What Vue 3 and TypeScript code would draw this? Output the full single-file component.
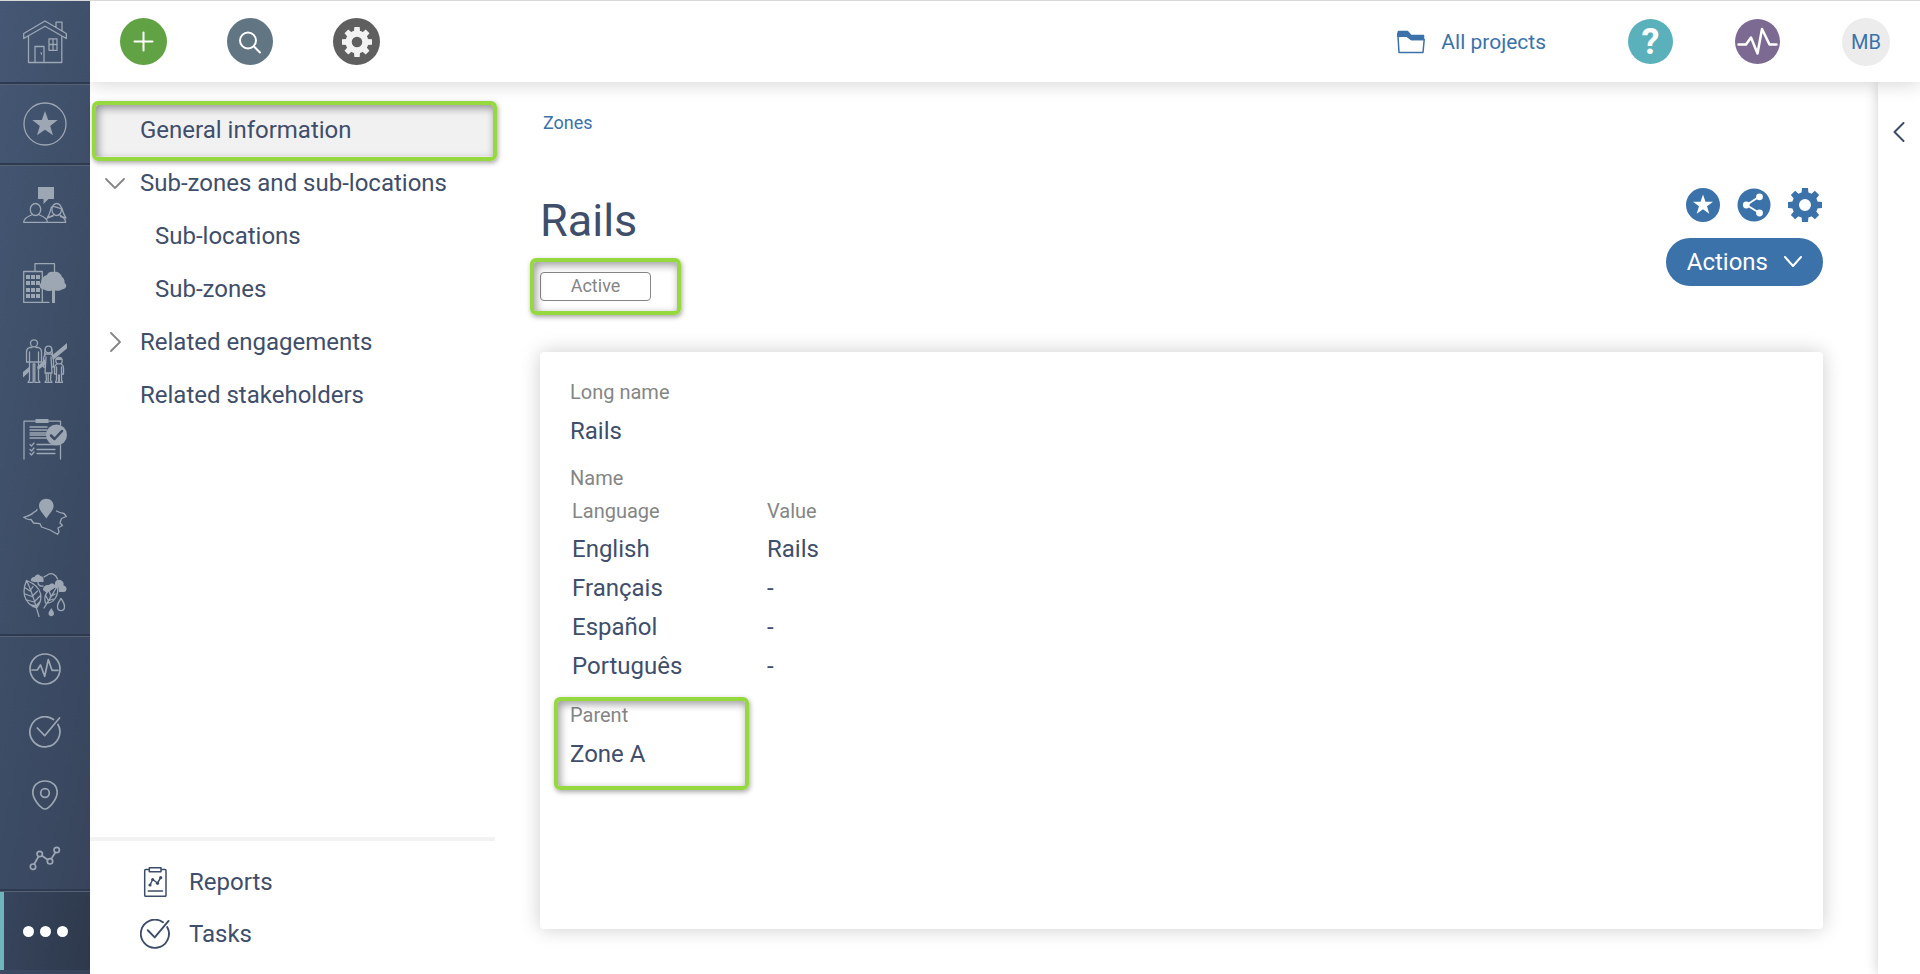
<script setup lang="ts">
interface NameRow {
  language: string
  value: string
}

const names: NameRow[] = [
  { language: 'English', value: 'Rails' },
  { language: 'Français', value: '-' },
  { language: 'Español', value: '-' },
  { language: 'Português', value: '-' },
]

const teeth: number[] = [0, 45, 90, 135, 180, 225, 270, 315]
const windowCols: number[] = [4, 9, 14]
const windowRows: number[] = [14, 20, 27, 33]
const textLines: number[] = [10, 13, 16, 18, 21]
const checkLines: number[] = [27, 32, 36]
</script>

<template>
  <div class="app">
    <nav class="rail" aria-label="Modules">
      <a class="rail-item home" href="#" aria-label="Home">
        <svg class="icon-lg" viewBox="0 0 44 44">
          <path d="M22 1 43.300 13.500V18.500L22 6.200.700 18.500V13.500ZM33 7.300V2.200h6v8.500M5.500 16V42.500H38.800V16M12 42V26.500h9V42M26 18.800h8v11.500H26ZM30 18.800v11.500M26 24.500h8" />
          <path class="solid" d="M17 32.500h2v3Z" />
        </svg>
      </a>
      <a class="rail-item" href="#" aria-label="Favorites">
        <svg class="icon-lg" viewBox="0 0 44 44">
          <circle cx="22" cy="22" r="21" />
          <path class="solid" d="M22 9 25.200 18H34.700L27.200 23.900 30 33.200 22 27.800 14 33.200 16.800 23.900 9.300 18H18.800Z" />
        </svg>
      </a>
      <div class="rail-group">
        <a class="rail-item" href="#" aria-label="Engagement">
          <svg class="icon-lg" viewBox="0 0 44 44">
            <path class="solid" d="M15 4H31V16H25.500L20.500 21V16H15Z" />
            <ellipse cx="12.500" cy="26.500" rx="5.200" ry="6" />
            <path d="M.700 39.300C1 34 6 33.500 9.500 31.500M15.500 31.500C19 33.500 24 34 24.500 39.300H.700M24.500 39.300H42.700C42.300 34.500 39.500 34 36 31.500M31.300 31.500 24 35.500" />
            <ellipse cx="33.700" cy="26.500" rx="4.800" ry="6" />
            <path d="M29 24C32 22 35 26 38.500 25.500M28.500 24C27 29 26.500 32 24.500 34.500L30 33M38.800 25C40 30 41 32 43 35L37.500 33.500" />
          </svg>
        </a>
        <a class="rail-item" href="#" aria-label="Land">
          <svg class="icon-lg" viewBox="0 0 44 44">
            <path d="M26 41.300H.700V10.500H19.300V41M12 10V2.700H31.500V12" />
            <template v-for="y in windowRows" :key="y">
              <rect v-for="x in windowCols" :key="x" class="solid" :x="x - 1" :y="y" width="4" height="4" />
            </template>
            <path class="solid" d="M24 14C25 11 28 10.500 30 11 34 10 38 12 39 16 41 17 42 20 41.500 22 45 24 43 28 39 28.500 36 30.500 34 29.500 32 29.500V42H29V29.500C26 30.500 23 30 21 28.500 17 28.500 15 24 18 22 18 18 20 15 24 14Z" />
          </svg>
        </a>
        <a class="rail-item" href="#" aria-label="Households">
          <svg class="icon-lg" viewBox="0 0 44 44">
            <path class="solid" d="M0 33 6 28V33L0 38.500ZM14 28 22 20V26L15 31ZM29 16.500 44 4V9.500L30 21Z" />
            <circle cx="11" cy="4.300" r="3.500" />
            <path d="M9 8.500H6.500Q3.500 9.500 3.500 13V23H6.500V13M13 8.500H15.500Q18.500 9.500 18.500 13V23H15.500V13M6.500 22V41L5 43.300H10.200V25H11.800V43.300H17L15.500 41V22M6.500 23H15.500" />
            <circle cx="25.500" cy="10.500" r="3.300" />
            <path d="M22.300 10 21.500 15H29.500L28.700 10M22.500 15.500Q20.500 17 20.500 21V28H22.500M28.500 15.500Q30.500 17 30.500 21V28H28.500M23 18 22 34H29L28 18M23 34 23.500 41 22 43.300H25.200V34M28 34 27.500 41 29 43.300H25.800" />
            <circle cx="36" cy="21.700" r="3.200" />
            <path class="solid" d="M33 20Q36 17.500 39 20L39.500 21H32.500Z" />
            <path d="M34 25Q31.500 26 31.500 29V35H33.500V28M38 25Q40.500 26 40.500 29V35H38.500V28M33.500 34V41L32.500 43.300H35.700V36M38.500 34V41L39.500 43.300H36.300V36" />
          </svg>
        </a>
        <a class="rail-item" href="#" aria-label="Compliance">
          <svg class="icon-lg" viewBox="0 0 44 44">
            <path d="M1 42V4.200H37.500V8M37.500 28V42" />
            <path class="solid" d="M12.500 2h13v4h-13Z" />
            <path v-for="y in textLines" :key="y" d="M7 0H24" :transform="`translate(0 ${y})`" />
            <path v-for="y in checkLines" :key="y" d="M7 .500 8.500 2 11-1M14 .500H32" :transform="`translate(0 ${y})`" />
            <circle class="solid" cx="33.500" cy="18" r="10.500" />
            <path class="cut" d="M28 18.500 31.500 22 39 14" />
          </svg>
        </a>
        <a class="rail-item" href="#" aria-label="Locations">
          <svg class="icon-lg" viewBox="0 0 44 44">
            <path class="solid" d="M23.300 23.500C21 19.500 16 15.500 16 11 16 6.500 19.300 3.700 23.300 3.700S30.600 6.500 30.600 11C30.600 15.500 25.600 19.500 23.300 23.500Z" />
            <path d="M14 14.500C14 17 11 16 10 18 8 20.500 4 21 .700 22.300 3 24 5 25 8 24.500L10.500 28 17 28.700 18.500 32 27 35 34.500 39.300 36 37 35 33 39.500 30.500 37 28 38.500 23.500 43.300 21.500 41 18.500C38 18 36 17.500 33.500 16" />
          </svg>
        </a>
        <a class="rail-item" href="#" aria-label="Environment">
          <svg class="icon-lg" viewBox="0 0 44 44">
            <path d="M3.500 7.500C-1 18 0 30 13.500 35 20 27 21 14 3.500 7.500ZM3.500 7.500C9 18 12 30 16 43.500M2.500 15 7 18 10 13.500M2 21 9 23.500 14.500 18M4 27 11 29 17 23M8 32 13 33 17.500 28" />
            <path class="solid" d="M8 8C7.500 5 9.500 4 11.500 4 12.500 1 16 .500 17.500 3 20 3 21 6 20.500 9H11Z" />
            <path d="M21 4C23 2 24 3 25 1.500 29-.500 33 1.500 34.500 6M15 9.500C15 12 17 13.500 20 13" />
            <path class="solid" d="M20 17C20 13 23 11.500 26 12 28 9.500 31 10.500 32 12 31 7 37 5 40 9 41 10.500 40.500 12 40.500 12.500 44.500 13 44.500 18.500 41 19H36C36 16 35.500 14 34.500 13L24 20Z" />
            <path d="M34.500 13C25 15 20 22 22.500 30 31 31 36 22 34.500 13ZM34.500 13C30 20 27 26 21 35M26 18 28 23M32 21 27 24M23 23 25 27M30 26 25 28M38 25.500C35.500 29 34.500 31 34.500 33.500 34.500 39 41.500 39 41.500 33.500 41.500 31 40.500 29 38 25.500Z" />
            <path class="solid" d="M28.300 35C26.500 38 25.500 39 25.500 40.500 25.500 44 31 44 31 40.500 31 39 30 38 28.300 35Z" />
          </svg>
        </a>
      </div>
      <div class="rail-group">
        <a class="rail-item short" href="#" aria-label="Activity">
          <svg class="icon-md" viewBox="0 0 32 32">
            <circle cx="16" cy="16" r="15" />
            <path d="M3 17H8.300L11.500 12 15.700 23.300 19.300 6.500 23 17.300H29" />
          </svg>
        </a>
        <a class="rail-item short" href="#" aria-label="Tasks">
          <svg class="icon-md" viewBox="0 0 32 32">
            <path d="M24.500 3.500A15 15 0 1 0 29 8.500M8.300 12 15.700 19.700 30.500 2" />
          </svg>
        </a>
        <a class="rail-item short" href="#" aria-label="Places">
          <svg class="icon-md" viewBox="0 0 32 32">
            <path d="M16 30C12 30 3.800 20 3.800 13.500 3.800 6.500 9 2 16 2S28.200 6.500 28.200 13.500C28.200 20 20 30 16 30Z" />
            <circle cx="16" cy="14" r="4.300" />
          </svg>
        </a>
        <a class="rail-item short" href="#" aria-label="Indicators">
          <svg class="icon-md" viewBox="0 0 32 32">
            <path d="M5.300 22 9.500 14.500M13 13.700 18.700 17.700M22.300 16.700 26.500 10.300" />
            <circle cx="4" cy="24.700" r="2.700" /><circle cx="10.700" cy="12" r="2.700" />
            <circle cx="21" cy="19.300" r="2.700" /><circle cx="27.700" cy="8" r="2.700" />
          </svg>
        </a>
      </div>
      <button class="more" type="button" aria-label="More">
        <span class="dot"></span><span class="dot"></span><span class="dot"></span>
      </button>
    </nav>

    <div class="page">
      <header class="topbar">
        <div class="tools">
          <button class="round add" type="button" aria-label="Add">
            <svg width="47" height="47" viewBox="0 0 47 47"><path d="M23.500 14.500v18M14.500 23.500h18" /></svg>
          </button>
          <button class="round search" type="button" aria-label="Search">
            <svg width="46" height="46" viewBox="0 0 46 46"><circle cx="21" cy="21.500" r="8" /><path d="M27 27.500 33 33.500" /></svg>
          </button>
          <button class="round settings" type="button" aria-label="Settings">
            <svg class="gear" width="30" height="30" viewBox="0 0 34 34">
              <circle cx="17" cy="17" r="9.500" />
              <path v-for="a in teeth" :key="a" d="M13.500 6 14 0h6l.500 6Z" :transform="`rotate(${a} 17 17)`" />
            </svg>
          </button>
        </div>
        <div class="account">
          <a class="projects" href="#">
            <svg width="28" height="24" viewBox="0 0 28 24">
              <path class="fill" d="M0 6 1.500 1.500H10.500L14 5.500H26.500V9.500H14L9.500 6Z" />
              <path d="M1 6.500 2 22.500H26L27.200 9.500H14.500L10 6Z" />
            </svg>
            All projects
          </a>
          <button class="round help" type="button" aria-label="Help">?</button>
          <button class="round pulse" type="button" aria-label="Activity feed">
            <svg width="45" height="45" viewBox="0 0 45 45"><path d="M3.500 25.500H11L16 18.500 22.500 34.500 27 10 34.500 25.500H41.500" /></svg>
          </button>
          <button class="round user" type="button">MB</button>
        </div>
      </header>

      <div class="body">
        <aside class="sections">
          <nav class="tree" aria-label="Sections">
            <a class="node current" href="#">General information<span class="mark mark-node"></span></a>
            <a class="node" href="#">
              <svg class="caret" width="20" height="20" viewBox="0 0 20 20"><path d="M1 6 10 15 19 6" /></svg>
              Sub-zones and sub-locations
            </a>
            <a class="node child" href="#">Sub-locations</a>
            <a class="node child" href="#">Sub-zones</a>
            <a class="node" href="#">
              <svg class="caret" width="20" height="20" viewBox="0 0 20 20"><path d="M6 1 15 10 6 19" /></svg>
              Related engagements
            </a>
            <a class="node" href="#">Related stakeholders</a>
          </nav>
          <nav class="shortcuts" aria-label="Shortcuts">
            <a class="shortcut" href="#">
              <svg width="30" height="30" viewBox="0 0 30 30">
                <path d="M9 2.500H5.700Q4.700 2.500 4.700 3.500V28.300Q4.700 29.300 5.700 29.300H25Q26 29.300 26 28.300V3.500Q26 2.500 25 2.500H21.300M9.300.800H21V4.700H9.300ZM8.300 24H22.500M10 18 12.700 12.500 17.500 16 20.700 10.700" />
                <circle class="fill" cx="10" cy="18" r="1.600" /><circle class="fill" cx="12.700" cy="12.500" r="1.500" />
                <circle class="fill" cx="17.500" cy="16.300" r="1.600" /><circle class="fill" cx="20.700" cy="10.700" r="1.600" />
              </svg>
              Reports
            </a>
            <a class="shortcut" href="#">
              <svg width="30" height="30" viewBox="0 0 32 32">
                <path class="bold" d="M24.500 3.500A15 15 0 1 0 29 8.500M8.300 12 15.700 19.700 30.500 2" />
              </svg>
              Tasks
            </a>
          </nav>
        </aside>

        <main class="content">
          <a class="crumb" href="#">Zones</a>
          <div class="heading">
            <div>
              <h1>Rails</h1>
              <div class="status"><span class="badge">Active</span><span class="mark mark-status"></span></div>
            </div>
            <div class="commands">
              <div class="icons">
                <button class="plain" type="button" aria-label="Add to favorites">
                  <svg width="34" height="34" viewBox="0 0 34 34">
                    <circle class="blue" cx="17" cy="17" r="17" />
                    <path class="white" d="M17 6.500 19.500 13.700H27L21 18.300 23.300 25.700 17 21.300 10.700 25.700 13 18.300 7 13.700H14.500Z" />
                  </svg>
                </button>
                <button class="plain" type="button" aria-label="Share">
                  <svg width="34" height="34" viewBox="0 0 34 34">
                    <circle class="blue" cx="17" cy="17" r="16.500" />
                    <path class="link" d="M22.500 8.500 9.500 17 22.500 25" />
                    <circle class="white" cx="22.500" cy="8.800" r="3.400" /><circle class="white" cx="9.300" cy="17" r="3.400" /><circle class="white" cx="22.500" cy="25" r="3.400" />
                  </svg>
                </button>
                <button class="plain" type="button" aria-label="Configure">
                  <svg class="gear" width="34" height="34" viewBox="0 0 34 34">
                    <circle cx="17" cy="17" r="9.500" />
                    <path v-for="a in teeth" :key="a" d="M13.500 6 14 0h6l.500 6Z" :transform="`rotate(${a} 17 17)`" />
                  </svg>
                </button>
              </div>
              <button class="actions" type="button">
                Actions
                <svg width="18" height="12" viewBox="0 0 18 12"><path d="M1 1 9 10 17 1" /></svg>
              </button>
            </div>
          </div>

          <section class="card">
            <div class="label">Long name</div>
            <div class="value">Rails</div>
            <div class="label spaced">Name</div>
            <table>
              <thead>
                <tr><th scope="col">Language</th><th scope="col">Value</th></tr>
              </thead>
              <tbody>
                <tr v-for="row in names" :key="row.language">
                  <td>{{ row.language }}</td>
                  <td>{{ row.value }}</td>
                </tr>
              </tbody>
            </table>
            <div class="parent">
              <div class="label">Parent</div>
              <div class="value">Zone A</div>
              <span class="mark mark-parent"></span>
            </div>
          </section>
        </main>

        <aside class="drawer">
          <button class="plain" type="button" aria-label="Open panel">
            <svg width="12" height="20" viewBox="0 0 12 20"><path d="M10.500 1 1.500 10 10.500 19" /></svg>
          </button>
        </aside>
      </div>
    </div>
  </div>
</template>

<style>
body {
  margin: 0;
}
</style>

<style scoped>
* {
  box-sizing: border-box;
}

.app {
  display: flex;
  min-height: 100vh;
  border-top: 1px solid #d9d9d9;
  background: #fff;
  color: #3f4e6a;
  font-family: Roboto, sans-serif;
  font-size: 24px;
}

a {
  color: inherit;
  text-decoration: none;
}

button {
  border: 0;
  padding: 0;
  background: none;
  color: inherit;
  font: inherit;
  cursor: pointer;
}

svg {
  display: block;
  flex: none;
  fill: none;
  stroke-linecap: round;
  stroke-linejoin: round;
}

/* Module rail */
.rail {
  flex: none;
  display: flex;
  flex-direction: column;
  width: 90px;
  background: linear-gradient(100deg, #455774 0%, #3d4d66 50%, #37435b 100%);
}

.rail-item {
  display: flex;
  align-items: center;
  justify-content: center;
  height: 78px;
}

.rail > .rail-item,
.rail-group {
  box-sizing: content-box;
  border-bottom: 2px solid #2e3a4f;
  box-shadow: 0 1px 0 #566174;
  margin-bottom: 1px;
}

.rail > .home {
  height: 81px;
}

.rail-item.short {
  height: 63px;
}

.rail svg {
  stroke: #9da6b3;
  stroke-width: 1.3;
}

.rail .icon-lg {
  width: 44px;
  height: 44px;
}

.rail .icon-md {
  width: 32px;
  height: 32px;
  stroke-width: 1.7;
}

.rail .solid {
  fill: #9da6b3;
  stroke: none;
}

.rail .cut {
  stroke: #3d4b63;
  stroke-width: 2.5;
}

.more {
  display: flex;
  align-items: center;
  justify-content: center;
  gap: 6px;
  height: 78px;
  border-left: 4px solid #6fb5bb;
  padding-right: 4px;
  background: linear-gradient(100deg, #37455d, #303c50 70%, #2f394d);
}

.dot {
  width: 11px;
  height: 11px;
  border-radius: 50%;
  background: #fff;
}

/* Top bar */
.page {
  flex: 1;
  display: flex;
  flex-direction: column;
  min-width: 0;
}

.topbar {
  position: relative;
  z-index: 2;
  display: flex;
  align-items: center;
  justify-content: space-between;
  height: 81px;
  padding: 0 30px;
  background: #fff;
  box-shadow: 0 0 20px rgba(0, 0, 0, 0.2);
  clip-path: inset(0 0 -30px 0);
}

.tools {
  display: flex;
  align-items: center;
  gap: 60px;
}

.account {
  display: flex;
  align-items: center;
  gap: 62px;
}

.round {
  display: flex;
  align-items: center;
  justify-content: center;
  width: 47px;
  height: 47px;
  border-radius: 50%;
}

.round svg {
  stroke: #fff;
  stroke-width: 2;
}

.add {
  background: #61a245;
}

.search {
  width: 46px;
  background: #627583;
}

.settings {
  background: #5f5f5f;
}

.gear circle {
  stroke: #3b72a9;
  stroke-width: 7;
}

.gear path {
  fill: #3b72a9;
  stroke: none;
}

.settings .gear circle {
  stroke: #f2f2f2;
}

.settings .gear path {
  fill: #f2f2f2;
}

.projects {
  display: flex;
  align-items: center;
  gap: 16px;
  margin-right: 20px;
  color: #3b72a9;
  font-size: 21px;
}

.projects svg {
  stroke: #3b72a9;
  stroke-width: 1.5;
}

.projects .fill {
  fill: #3b72a9;
}

.help {
  width: 45px;
  height: 45px;
  background: #5bb1bb;
  color: #fff;
  font-size: 36px;
  font-weight: 700;
}

.pulse {
  width: 45px;
  height: 45px;
  background: #7c6a92;
}

.pulse svg {
  stroke-width: 2.5;
}

.user {
  width: 48px;
  height: 48px;
  background: #ececec;
  color: #3b72a9;
  font-size: 20px;
}

/* Section tree */
.body {
  flex: 1;
  display: flex;
  min-height: 0;
}

.sections {
  flex: none;
  display: flex;
  flex-direction: column;
  justify-content: space-between;
  width: 405px;
  padding-top: 21px;
}

.node {
  position: relative;
  display: flex;
  align-items: center;
  height: 53px;
  padding-left: 50px;
}

.node.current {
  margin-left: 3px;
  padding-left: 47px;
  background: #f1f1f1;
}

.node.child {
  padding-left: 65px;
}

.caret {
  margin: 0 15px 0 -35px;
  stroke: #858585;
  stroke-width: 1.8;
}

.shortcuts {
  border-top: 4px solid #f2f2f2;
  padding: 15px 0 14px;
}

.shortcut {
  display: flex;
  align-items: center;
  gap: 19px;
  height: 52px;
  padding-left: 50px;
}

.shortcut svg {
  stroke: #3d4c68;
  stroke-width: 1.5;
}

.shortcut .fill {
  fill: #3d4c68;
  stroke: none;
}

.shortcut .bold {
  stroke-width: 2;
}

/* Annotation frames drawn over the content */
.mark {
  position: absolute;
  border: 4px solid #95d93f;
  border-radius: 6px;
  box-shadow: 1px 2px 5px rgba(0, 0, 0, 0.35), inset 2px 3px 8px rgba(0, 0, 0, 0.4);
  pointer-events: none;
}

.mark-node {
  inset: -2px -2px -5px -1px;
}

.mark-status {
  inset: -14px -30px -14px -10px;
}

.mark-parent {
  inset: -6px -8px -16px -16px;
}

/* Record */
.content {
  flex: 1;
  display: flex;
  flex-direction: column;
  min-width: 0;
  padding: 29px 55px 45px 45px;
}

.crumb {
  align-self: flex-start;
  margin-left: 3px;
  color: #3b72a9;
  font-size: 18px;
  line-height: 24px;
}

.heading {
  display: flex;
  justify-content: space-between;
  margin: 53px 0 51px;
}

h1 {
  margin: 7px 0 25px;
  font-size: 45px;
  font-weight: 400;
  line-height: 52px;
}

.status {
  position: relative;
  width: 111px;
}

.badge {
  display: block;
  border: 1px solid #858585;
  border-radius: 4px;
  padding-bottom: 1px;
  color: #858585;
  font-size: 18px;
  line-height: 26px;
  text-align: center;
}

.commands {
  display: flex;
  flex-direction: column;
  align-items: flex-end;
  gap: 16px;
}

.icons {
  display: flex;
  gap: 17px;
  padding-right: 1px;
}

.blue {
  fill: #3b72a9;
}

.white {
  fill: #fff;
}

.link {
  stroke: #fff;
  stroke-width: 2;
}

.actions {
  display: flex;
  align-items: center;
  gap: 16px;
  height: 48px;
  border-radius: 24px;
  padding: 0 21px;
  background: #3b72a9;
  color: #fff;
}

.actions svg {
  stroke: #fff;
  stroke-width: 2;
}

.card {
  flex: 1;
  border-radius: 4px;
  padding: 28px 30px;
  box-shadow: 0 0 20px rgba(0, 0, 0, 0.2);
}

.label,
th {
  color: #858585;
  font-size: 20px;
  font-weight: 400;
  line-height: 24px;
}

.value,
td {
  line-height: 39px;
}

.value {
  margin-top: 8px;
}

.spaced {
  margin-top: 15px;
}

table {
  margin: 9px 0 17px 2px;
  border-collapse: collapse;
  text-align: left;
}

th,
td {
  width: 195px;
  padding: 0;
}

th {
  padding-bottom: 7px;
}

.parent {
  position: relative;
  width: 171px;
}

/* Collapsed side panel */
.drawer {
  flex: none;
  width: 42px;
  padding: 38px 15px 0;
  box-shadow: 0 0 12px rgba(0, 0, 0, 0.2);
}

.drawer svg {
  stroke: #3d4c68;
  stroke-width: 2;
}
</style>
